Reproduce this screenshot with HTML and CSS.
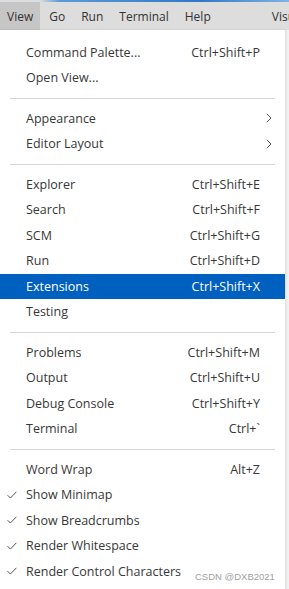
FILE: index.html
```html
<!DOCTYPE html>
<html>
<head>
<meta charset="utf-8">
<link rel="stylesheet" href="styles.css">
</head>
<body>
<div class="topline"></div>
<div class="menubar">
  <span class="mb-item active">View</span>
  <span class="mb-item">Go</span>
  <span class="mb-item">Run</span>
  <span class="mb-item">Terminal</span>
  <span class="mb-item">Help</span>
  <span class="mb-title">Visu</span>
</div>
<div class="stage">
  <div class="menu">
    <div class="row"><span class="check"></span><span class="label">Command Palette...</span><span class="key">Ctrl+Shift+P</span><span class="sub"></span></div>
    <div class="row"><span class="check"></span><span class="label">Open View...</span><span class="key"></span><span class="sub"></span></div>
    <div class="sep"></div>
    <div class="row"><span class="check"></span><span class="label">Appearance</span><span class="key"></span><span class="sub"><svg width="6" height="10" viewBox="0 0 6 10"><path d="M0.8 0.8 L5 5 L0.8 9.2" fill="none" stroke="#555" stroke-width="1"/></svg></span></div>
    <div class="row"><span class="check"></span><span class="label">Editor Layout</span><span class="key"></span><span class="sub"><svg width="6" height="10" viewBox="0 0 6 10"><path d="M0.8 0.8 L5 5 L0.8 9.2" fill="none" stroke="#555" stroke-width="1"/></svg></span></div>
    <div class="sep"></div>
    <div class="row"><span class="check"></span><span class="label">Explorer</span><span class="key">Ctrl+Shift+E</span><span class="sub"></span></div>
    <div class="row"><span class="check"></span><span class="label">Search</span><span class="key">Ctrl+Shift+F</span><span class="sub"></span></div>
    <div class="row"><span class="check"></span><span class="label">SCM</span><span class="key">Ctrl+Shift+G</span><span class="sub"></span></div>
    <div class="row"><span class="check"></span><span class="label">Run</span><span class="key">Ctrl+Shift+D</span><span class="sub"></span></div>
    <div class="row selected"><span class="check"></span><span class="label">Extensions</span><span class="key">Ctrl+Shift+X</span><span class="sub"></span></div>
    <div class="row"><span class="check"></span><span class="label">Testing</span><span class="key"></span><span class="sub"></span></div>
    <div class="sep"></div>
    <div class="row"><span class="check"></span><span class="label">Problems</span><span class="key">Ctrl+Shift+M</span><span class="sub"></span></div>
    <div class="row"><span class="check"></span><span class="label">Output</span><span class="key">Ctrl+Shift+U</span><span class="sub"></span></div>
    <div class="row"><span class="check"></span><span class="label">Debug Console</span><span class="key">Ctrl+Shift+Y</span><span class="sub"></span></div>
    <div class="row"><span class="check"></span><span class="label">Terminal</span><span class="key">Ctrl+`</span><span class="sub"></span></div>
    <div class="sep"></div>
    <div class="row"><span class="check"></span><span class="label">Word Wrap</span><span class="key">Alt+Z</span><span class="sub"></span></div>
    <div class="row"><span class="check"><svg width="10" height="8" viewBox="0 0 10 8"><path d="M0.6 4.2 L3.4 7 L9.4 0.8" fill="none" stroke="#555" stroke-width="1"/></svg></span><span class="label">Show Minimap</span><span class="key"></span><span class="sub"></span></div>
    <div class="row"><span class="check"><svg width="10" height="8" viewBox="0 0 10 8"><path d="M0.6 4.2 L3.4 7 L9.4 0.8" fill="none" stroke="#555" stroke-width="1"/></svg></span><span class="label">Show Breadcrumbs</span><span class="key"></span><span class="sub"></span></div>
    <div class="row"><span class="check"><svg width="10" height="8" viewBox="0 0 10 8"><path d="M0.6 4.2 L3.4 7 L9.4 0.8" fill="none" stroke="#555" stroke-width="1"/></svg></span><span class="label">Render Whitespace</span><span class="key"></span><span class="sub"></span></div>
    <div class="row"><span class="check"><svg width="10" height="8" viewBox="0 0 10 8"><path d="M0.6 4.2 L3.4 7 L9.4 0.8" fill="none" stroke="#555" stroke-width="1"/></svg></span><span class="label">Render Control Characters</span><span class="key"></span><span class="sub"></span></div>
  </div>
  <div class="side"></div>
  <div class="watermark">CSDN @DXB2021</div>
</div>
</body>
</html>
```
FILE: styles.css
```css
html, body {
  margin: 0;
  padding: 0;
  width: 289px;
  height: 589px;
  overflow: hidden;
  background: #ffffff;
  font-family: "Open Sans", "Noto Sans", sans-serif;
}
.topline {
  height: 2px;
  background: linear-gradient(90deg, #dddddd 0, #dddddd 40px, #5a9ad8 60px, #2f78c8 200px, #7fb4e4 289px);
}
.menubar {
  height: 28px;
  background: #dddddd;
  display: flex;
  align-items: stretch;
  font-size: 12px;
  color: #333333;
  white-space: nowrap;
  overflow: hidden;
}
.mb-item {
  display: flex;
  align-items: center;
  padding: 0 7px;
  margin-right: 2px;
}
.mb-item.active {
  background: #c6c6c6;
}
.mb-title {
  display: flex;
  align-items: center;
  margin-left: 52px;
}
.stage {
  position: relative;
  display: flex;
  height: 559px;
  background: #f2f2f2;
}
.menu {
  width: 285px;
  background: #ffffff;
  padding: 9.5px 0 0;
  font-size: 12.5px;
  color: #383838;
  box-shadow: 1px 0 2px rgba(0,0,0,0.12);
}
.side {
  flex: 1;
  border-left: 1px solid #e2e2e2;
}
.row {
  display: grid;
  grid-template-columns: 26px 1fr auto 25px;
  align-items: center;
  height: 25.5px;
  white-space: nowrap;
}
.row.selected {
  background: #0060c0;
  color: #ffffff;
}
.check {
  display: flex;
  justify-content: flex-end;
  padding-right: 9px;
}
.key {
  text-align: right;
}
.sub {
  display: flex;
  align-items: center;
  padding-left: 6px;
}
.sep {
  height: 1px;
  background: #d6d6d6;
  margin: 7px 10px;
}
.watermark {
  position: absolute;
  left: 195px;
  top: 541px;
  font-family: "Liberation Sans", Arial, sans-serif;
  font-size: 9.5px;
  color: #a0a0a0;
}
```
